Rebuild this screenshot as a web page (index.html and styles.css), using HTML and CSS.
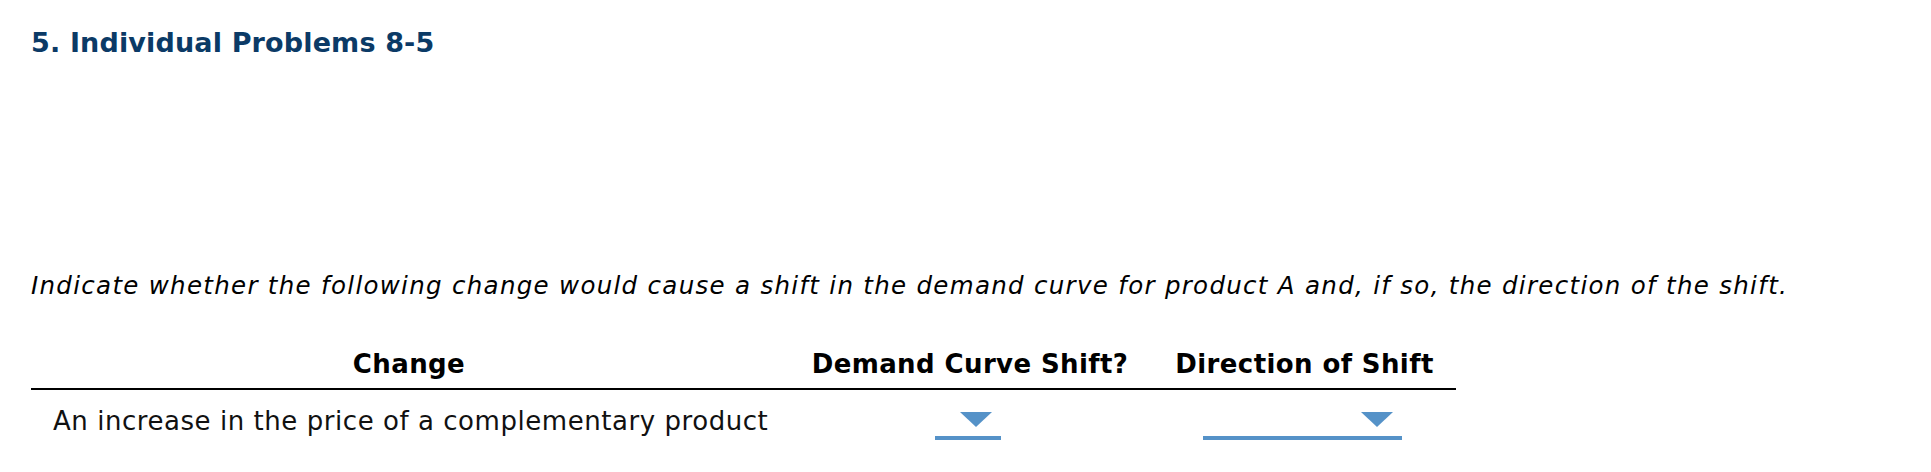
FILE: index.html
```html
<!DOCTYPE html>
<html>
<head>
<meta charset="utf-8">
<link rel="stylesheet" href="styles.css">
</head>
<body>
<div class="page">
  <h1 class="title">5. Individual Problems 8-5</h1>
  <p class="instructions">Indicate whether the following change would cause a shift in the demand curve for product A and, if so, the direction of the shift.</p>
  <div class="grid">
    <div class="head">Change</div>
    <div class="head">Demand Curve Shift?</div>
    <div class="head">Direction of Shift</div>
    <div class="cell text">An increase in the price of a complementary product</div>
    <div class="cell center"><span class="dropdown short"><span class="arrow"></span></span></div>
    <div class="cell center"><span class="dropdown long"><span class="arrow"></span></span></div>
  </div>
</div>
</body>
</html>
```
FILE: styles.css
```css
html, body {
  margin: 0;
  padding: 0;
  background: #ffffff;
}
body {
  font-family: "DejaVu Sans", Verdana, sans-serif;
  color: #000;
}
.page {
  padding: 27px 0 0 31px;
}
.title {
  margin: 0;
  font-size: 27px;
  line-height: 32px;
  font-weight: bold;
  letter-spacing: 0.15px;
  color: #0b3a66;
}
.instructions {
  margin: 213px 0 0 0;
  font-size: 24.5px;
  line-height: 28px;
  font-style: italic;
  letter-spacing: 1.3px;
}
.grid {
  margin-top: 49px;
  display: grid;
  grid-template-columns: 756px 366px 303px;
  width: 1425px;
}
.head {
  font-size: 26px;
  line-height: 30px;
  font-weight: bold;
  letter-spacing: 0.4px;
  text-align: center;
  padding-bottom: 9px;
  border-bottom: 2px solid #000;
}
.cell {
  padding-top: 16px;
  font-size: 26px;
  line-height: 30px;
  color: #111;
}
.text {
  padding-left: 22px;
  letter-spacing: 0.55px;
}
.center {
  display: flex;
  justify-content: center;
  padding-top: 18px;
  padding-right: 5px;
}
.dropdown {
  display: flex;
  justify-content: flex-end;
  box-sizing: border-box;
  height: 32px;
  padding-top: 4px;
  padding-right: 9px;
  border-bottom: 4px solid #5592c8;
}
.short { width: 66px; }
.long { width: 199px; }
.arrow {
  width: 0;
  height: 0;
  border-left: 16px solid transparent;
  border-right: 16px solid transparent;
  border-top: 15px solid #5592c8;
}
```
